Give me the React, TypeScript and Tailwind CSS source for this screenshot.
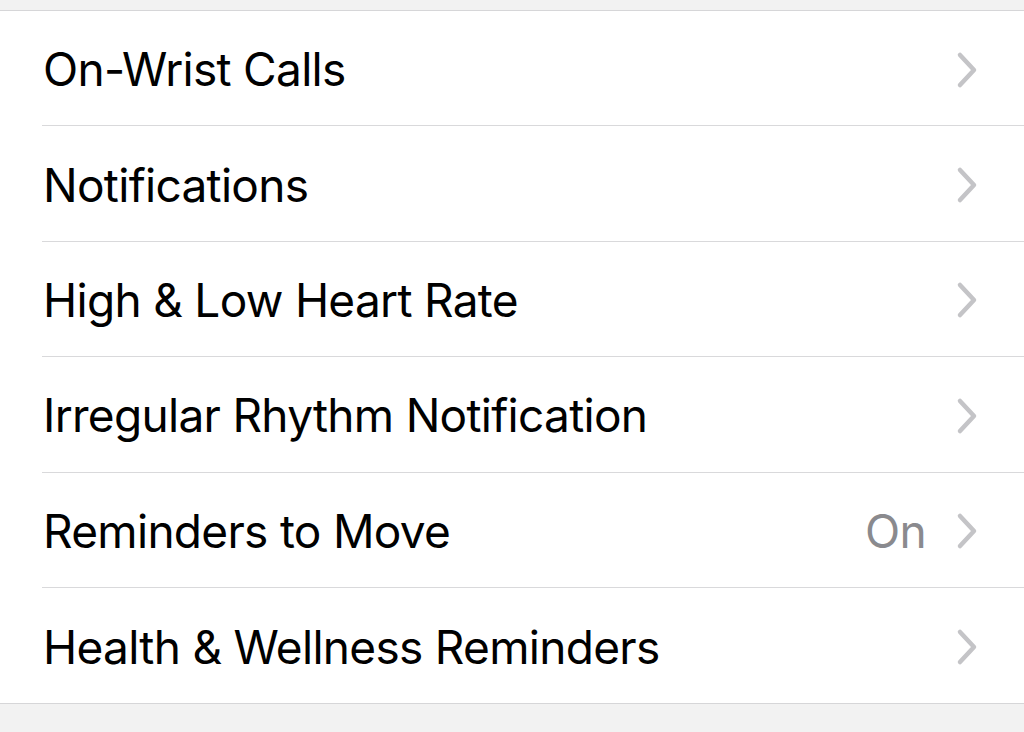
const rows: { label: string; value?: string }[] = [
  { label: "On-Wrist Calls" },
  { label: "Notifications" },
  { label: "High & Low Heart Rate" },
  { label: "Irregular Rhythm Notification" },
  { label: "Reminders to Move", value: "On" },
  { label: "Health & Wellness Reminders" },
];

function Chevron() {
  return (
    <svg width="24" height="38" viewBox="0 0 24 38" fill="none" className="shrink-0">
      <path
        d="M5 4 L19 19 L5 34"
        stroke="#c4c4c7"
        strokeWidth="4.5"
        strokeLinecap="round"
        strokeLinejoin="round"
      />
    </svg>
  );
}

export default function App() {
  return (
    <div
      className="h-[732px] w-[1024px] bg-[#f2f2f2] pt-[10px]"
      style={{ fontFamily: "Inter, 'Noto Sans', sans-serif" }}
    >
      <div className="border-y border-[#d6d6d8] bg-white pl-[42px]">
        {rows.map((row, i) => (
          <div
            key={row.label}
            className={
              "flex h-[115.4px] items-center pr-[45px] pt-[3px] " +
              (i < rows.length - 1 ? "border-b border-[#d9d9db]" : "")
            }
          >
            <span className="flex-1 pl-[1px] text-[46px] tracking-[-0.7px] text-black">
              {row.label}
            </span>
            {row.value && (
              <span className="mr-[29px] text-[46px] tracking-[-0.7px] text-[#8a8a8e]">
                {row.value}
              </span>
            )}
            <Chevron />
          </div>
        ))}
      </div>
    </div>
  );
}
